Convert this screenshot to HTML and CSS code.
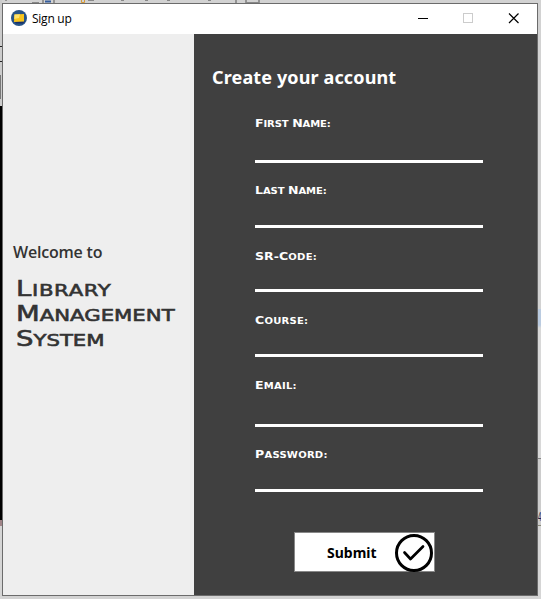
FILE: index.html
```html
<!DOCTYPE html>
<html lang="en">
<head>
<meta charset="utf-8">
<title>Sign up</title>
<link rel="stylesheet" href="styles.css">
</head>
<body>
<div class="desktop">
  <div class="behind-left"></div>
  <div class="behind-top">
    <svg width="536" height="3"><path d="M4 0v1M41 0v3M52 0v3M234 0v3M244 0v3M257 0v3" stroke="#555"/><path d="M43 1.5h6" stroke="#345d9d" stroke-width="2"/><path d="M79.500 0v2.500h3V0" stroke="#d79a38" fill="none"/><path d="M86 .5h6M119 .5h3M143 .5h3M165 .5h3M206 .5h3M30 2.500h7M244 2.500h13" stroke="#888"/></svg>
  </div>
  <main class="window">
    <header class="titlebar">
      <svg class="app-icon" width="16" height="16" viewBox="0 0 16 16"><circle cx="8" cy="8" r="8" fill="#285487"/><path d="M3 11l2 2.500h7l2-2z" fill="#182f67"/><path d="M3.500 4.500 13 4v7.500L3 12z" fill="#f9c51d"/><path d="M3.500 4.500 9 4.300 8 8 3.200 9z" fill="#ffe36b"/></svg>
      <span class="title">Sign up</span>
      <svg class="controls" width="112" height="30" viewBox="0 0 112 30" fill="none"><path d="M5 14.500h10" stroke="#000"/><rect x="50.500" y="9.500" width="9" height="9" stroke="#ccc"/><path d="M96 9.500l9.500 9.500M105.500 9.500 96 19" stroke="#000" stroke-width="1.200"/></svg>
    </header>
    <div class="content">
      <section class="brand">
        <p class="welcome">Welcome to</p>
        <h1 class="name"><span class="word loose">Library</span><span class="word">Management</span><span class="word">System</span></h1>
      </section>
      <section class="signup">
        <h2 class="heading">Create your account</h2>
        <form class="form">
          <div class="field first"><div class="label pair"><span class="word">First</span><span class="word">Name:</span></div></div>
          <div class="field last"><div class="label pair"><span class="word">Last</span><span class="word">Name:</span></div></div>
          <div class="field code"><div class="label"><span>SR-</span><span class="word">Code:</span></div></div>
          <div class="field course"><div class="label"><span class="word">Course:</span></div></div>
          <div class="field email"><div class="label"><span class="word">Email:</span></div></div>
          <div class="field password"><div class="label"><span class="word">Password:</span></div></div>
          <button class="submit" type="button"><span>Submit</span>
            <svg width="40" height="39" viewBox="0 0 40 39" fill="none" stroke="#000"><circle cx="20" cy="20" r="17.500" stroke-width="3"/><path d="M10.500 19.500l6 6.500L29 13.500" stroke-width="2.700" stroke-linecap="round" stroke-linejoin="round"/></svg>
          </button>
        </form>
      </section>
    </div>
  </main>
  <div class="behind-right"><span>4</span></div>
</div>
</body>
</html>
```
FILE: styles.css
```css
* { box-sizing: border-box; }
body { margin: 0; overflow: hidden; }
p, h1, h2 { margin: 0; }
.desktop {
  width: 541px;
  height: 599px;
  display: grid;
  grid-template: 3px 593px 3px / 2px 536px 3px;
  background: #d2d2d2;
}
.behind-left {
  grid-row: 1 / 4;
  background:
    linear-gradient(#222, #222) 0 46px / 2px 1px no-repeat,
    linear-gradient(#222, #222) 0 61px / 2px 1px no-repeat,
    linear-gradient(#777, #777) 0 75px / 1px 24px no-repeat,
    linear-gradient(#ccc 106px, #000 106px, #000 520px, #a08488 520px, #a08488 526px, #d5d5d5 526px);
}
.behind-top { grid-column: 2; overflow: hidden; }
.behind-top svg { display: block; }
.behind-right {
  grid-column: 3;
  grid-row: 1 / 4;
  padding-top: 510px;
  font: 12px/14px "Liberation Sans", sans-serif;
  color: #1b1d46;
  background: linear-gradient(#d2d2d2 309px, #bacbe0 309px, #bacbe0 325px, #d8d8d8 328px, #d8d8d8 458px, #888 458px, #888 459px, #ccc 459px, #ccc 525px, #887 525px, #887 526px, #d5d5d5 526px);
}
.behind-right span { display: block; transform: scaleX(0.5); transform-origin: 0 0; }
.window {
  grid-column: 2;
  grid-row: 2;
  border: 1px solid #6b6b6b;
  display: flex;
  flex-direction: column;
  background: #fff;
}
.titlebar {
  height: 30px;
  display: flex;
  align-items: center;
  padding-left: 8px;
  font: 12px/16px "Open Sans", sans-serif;
  color: #000;
}
.app-icon { margin-bottom: 2px; }
.title { margin-left: 5px; letter-spacing: -0.25px; }
.controls { margin-left: auto; margin-right: 12px; }
.content { flex: 1; display: flex; }
.brand {
  width: 191px;
  padding: 207px 0 0 10px;
  background: #eee;
  color: #333;
}
.welcome { font: 600 16px/22px "Open Sans", sans-serif; letter-spacing: -0.2px; white-space: nowrap; }
.word { display: inline-block; }
.name {
  margin: 14px 0 0 2.5px;
  display: flex;
  flex-direction: column;
  width: 125px;
  font: 16.2px/25px "DejaVu Sans", sans-serif;
  text-transform: uppercase;
  transform: scaleX(1.31);
  transform-origin: 0 0;
  -webkit-text-stroke: 0.6px #333;
}
.name .word { height: 25px; }
.name .loose { letter-spacing: 0.5px; }
.name .word::first-letter { font-size: 21px; }
.signup { flex: 1; background: #404040; color: #fff; padding: 31px 0 0 18px; }
.heading { font: 700 18px/24px "Noto Sans", sans-serif; letter-spacing: 0.13px; white-space: nowrap; }
.form { width: 228px; margin: 27px 0 0 43px; }
.field { border-bottom: 3px solid #fff; margin-bottom: 21px; }
.first { height: 47px; margin-bottom: 20px; }
.last { height: 45px; }
.code { height: 43px; }
.course { height: 44px; }
.email { height: 49px; margin-bottom: 20px; }
.password { height: 45px; margin-bottom: 0; }
.label {
  display: flex;
  align-items: baseline;
  width: 180px;
  height: 14px;
  padding-top: 1px;
  font: 700 8.8px/14px "DejaVu Sans", sans-serif;
  text-transform: uppercase;
  letter-spacing: 0.2px;
  white-space: nowrap;
  transform: scaleX(1.14);
  transform-origin: 0 0;
}
.pair { letter-spacing: -0.1px; }
.label .word::first-letter { font-size: 11px; }
.label .word + .word { margin-left: 3.2px; }
.label > span:not(.word) { font-size: 11px; letter-spacing: 0; }
.submit {
  display: flex;
  width: 141px;
  height: 40px;
  margin: 40px 0 0 39px;
  padding: 0 0 0 32px;
  border: 1px solid #888;
  background: #fff;
  color: #000;
  font: 700 14px/39px "Noto Sans", sans-serif;
}
.submit span { width: 67px; text-align: left; }
.submit svg { flex: none; }
```
